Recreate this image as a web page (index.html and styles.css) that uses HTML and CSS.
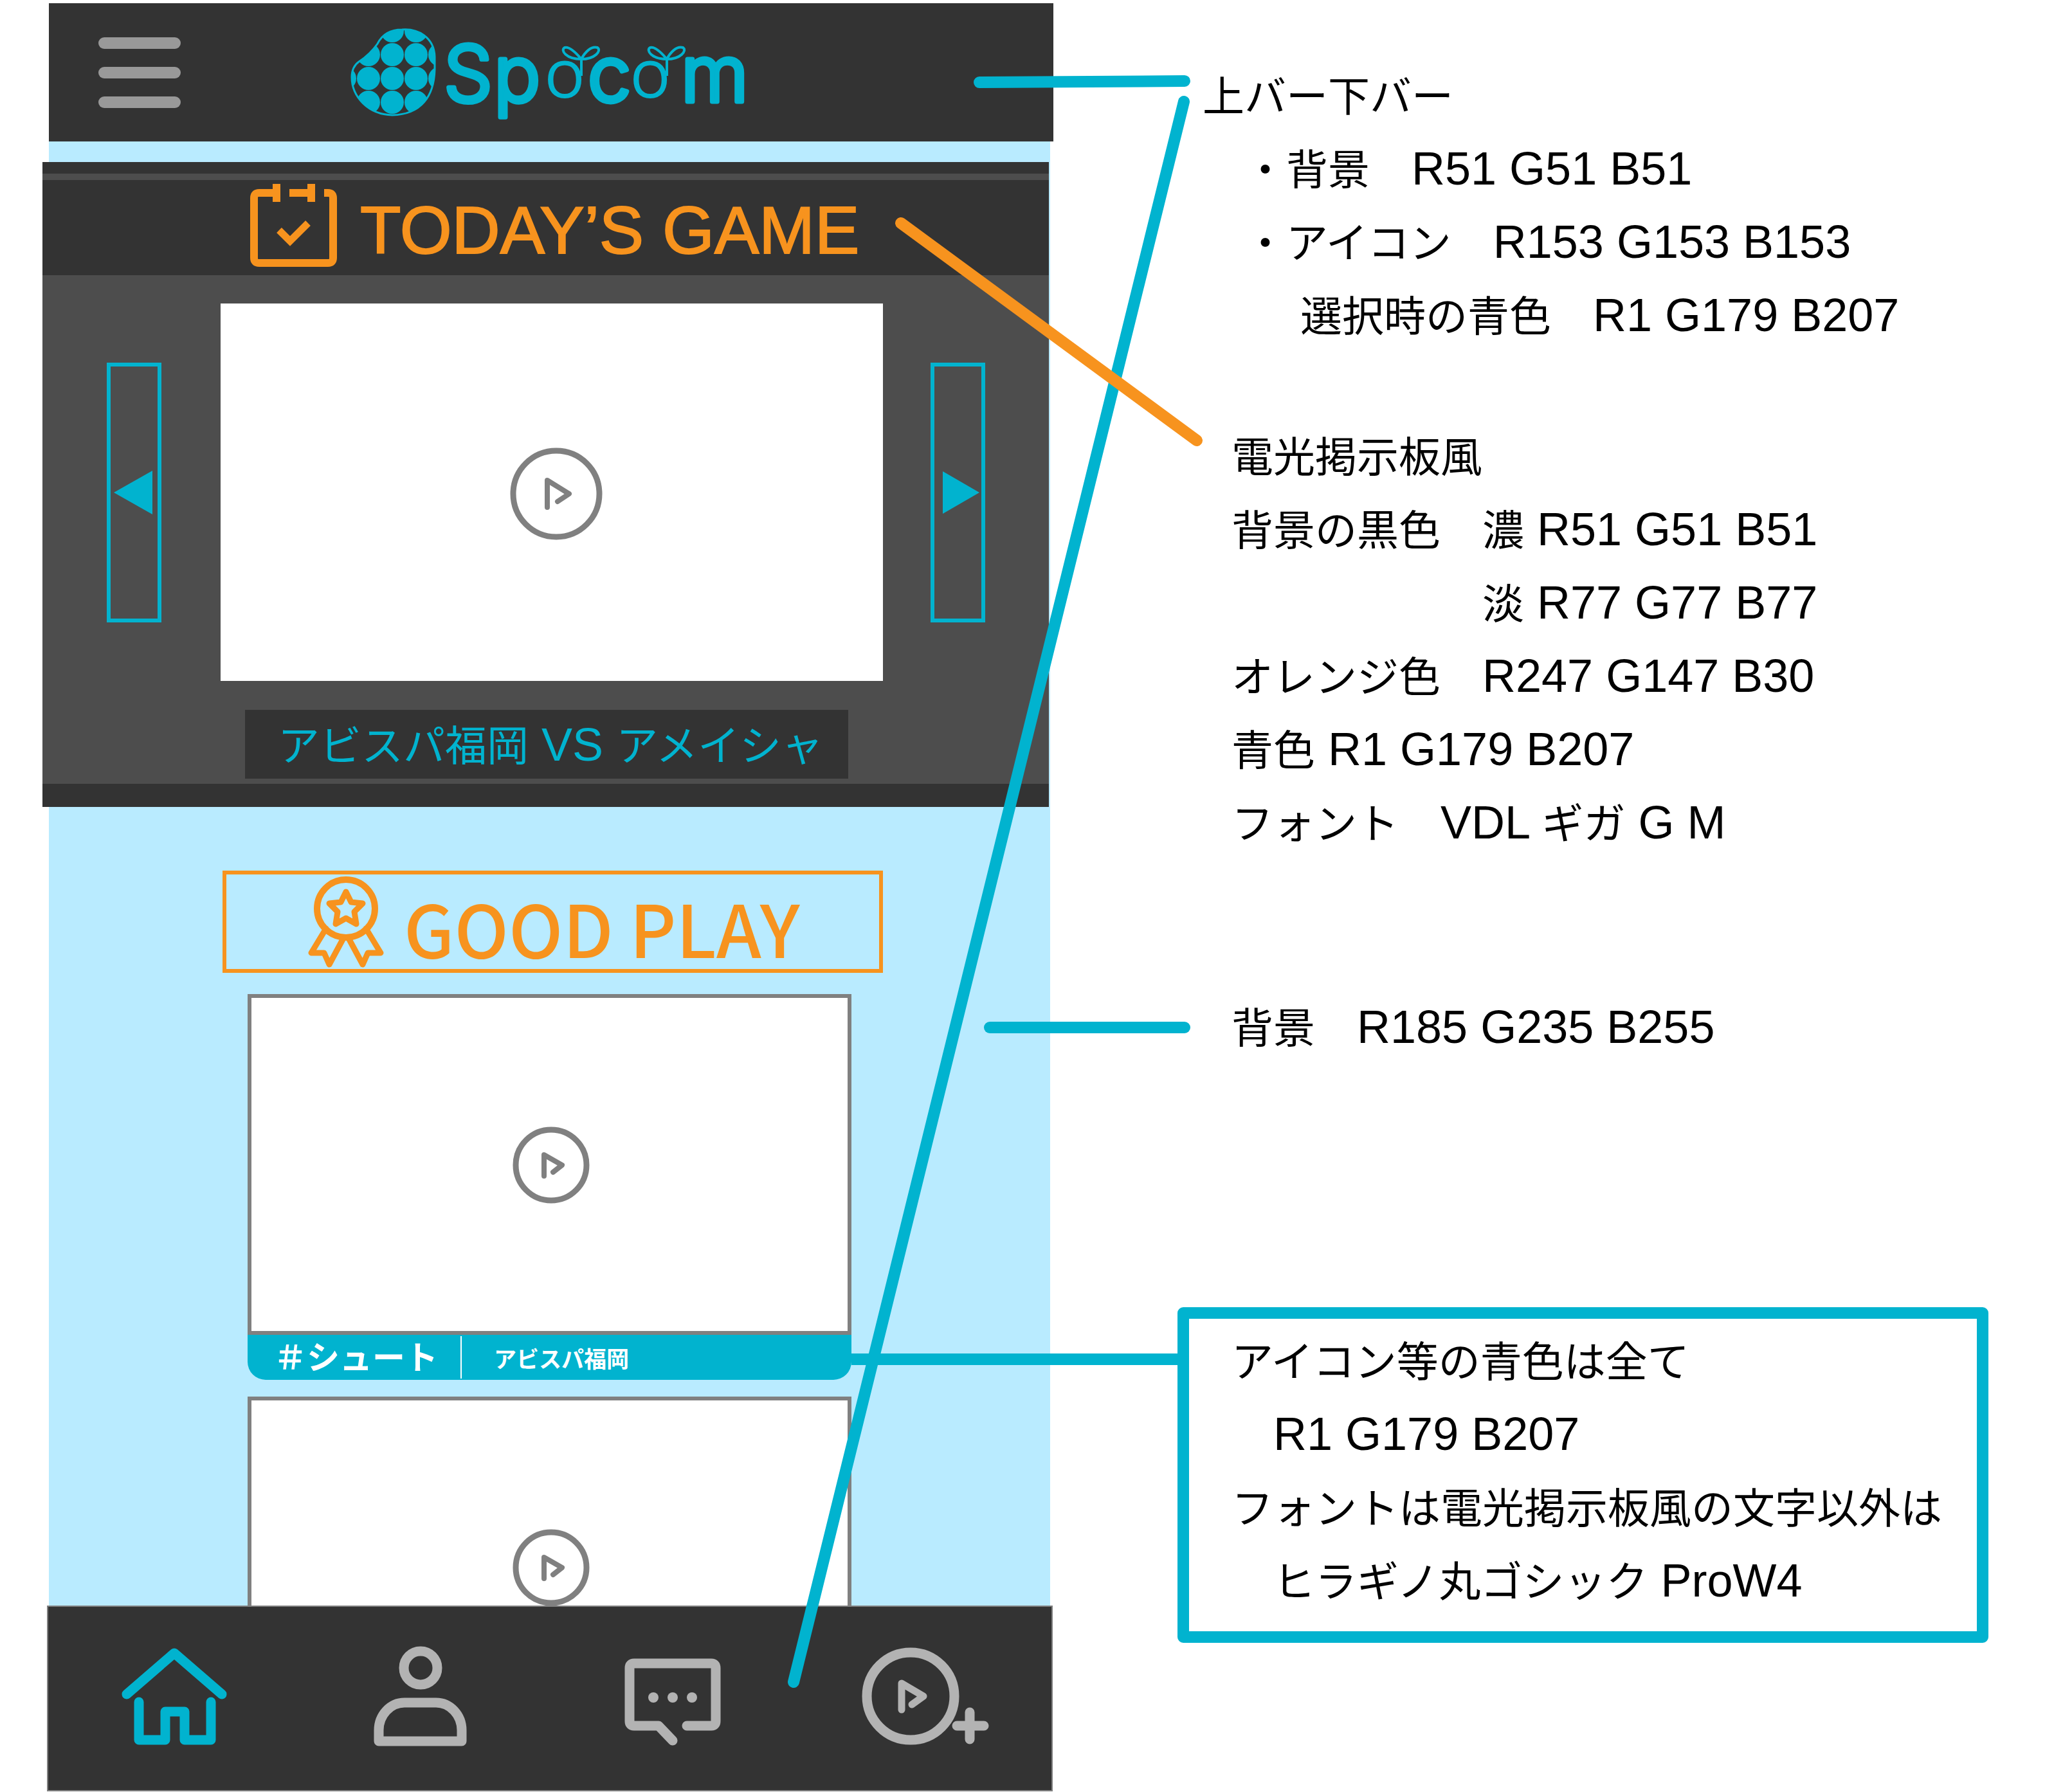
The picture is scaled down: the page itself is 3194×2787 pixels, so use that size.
FILE: index.html
```html
<!DOCTYPE html>
<html lang="ja">
<head>
<meta charset="utf-8">
<meta name="viewport" content="width=device-width, initial-scale=1">
<title>Spocom デザインガイド</title>
<link rel="stylesheet" href="styles.css">
</head>
<body>
<div class="sheet">
  <div class="phone">
    <header class="topbar">
      <button class="menu" type="button" aria-label="メニュー"><span></span><span></span><span></span></button>
      <svg class="logo" viewBox="546 5 612 215" role="img" aria-label="Spocom">
        <defs>
          <clipPath id="potato"><path d="M625 46C650 44 675 58 676 88V108C675 150 655 178 610 179C572 178 547 150 547 120C547 108 551 101 558 96C570 88 580 78 587 68C595 52 608 46 625 46Z"/></clipPath>
          <g id="sprout">
            <path d="M904 118V92M904 92C894 80 885 72 878 74C871 78 880 92 904 92C909 82 919 71 929 74C936 79 925 92 904 92"/>
          </g>
        </defs>
        <g clip-path="url(#potato)" fill="#01b3cf">
          <circle cx="610" cy="48" r="18"/><circle cx="647" cy="48" r="18"/>
          <circle cx="573" cy="85" r="18"/><circle cx="610" cy="85" r="18"/><circle cx="647" cy="85" r="18"/><circle cx="684" cy="85" r="18"/>
          <circle cx="536" cy="122" r="18"/><circle cx="573" cy="122" r="18"/><circle cx="610" cy="122" r="18"/><circle cx="647" cy="122" r="18"/><circle cx="684" cy="122" r="18"/>
          <circle cx="573" cy="159" r="18"/><circle cx="610" cy="159" r="18"/><circle cx="647" cy="159" r="18"/>
        </g>
        <path d="M625 46C650 44 675 58 676 88V108C675 150 655 178 610 179C572 178 547 150 547 120C547 108 551 101 558 96C570 88 580 78 587 68C595 52 608 46 625 46Z" fill="none" stroke="#01b3cf" stroke-width="3"/>
        <text class="wordmark" y="158"><tspan x="690">S</tspan><tspan x="768">p</tspan><tspan class="ring" x="848" y="151">o</tspan><tspan x="914" y="158">c</tspan><tspan class="ring" x="981" y="151">o</tspan><tspan x="1059" y="158">m</tspan></text>
        <g fill="none" stroke="#01b3cf" stroke-width="4" stroke-linejoin="round">
          <use href="#sprout"/><use href="#sprout" x="133"/>
        </g>
      </svg>
    </header>

    <main class="screen">
      <section class="board">
        <div class="board-title">
          <svg class="calendar" viewBox="389 286 135 129" aria-hidden="true">
            <g fill="none" stroke="#f7931e" stroke-width="12">
              <path d="M430 286V314M436 300H403Q395 300 395 308V401Q395 409 403 409H510Q518 409 518 401V308Q518 300 510 300H504"/>
              <path d="M450 300H490M484 286V314"/>
              <path d="M434 358L451 375L479 347" stroke-width="11"/>
            </g>
          </svg>
          <h1>TODAY’S GAME</h1>
        </div>
        <div class="carousel">
          <button class="arrow arrow-prev" type="button" aria-label="前へ"><svg width="60" height="68" viewBox="0 0 60 68"><path d="M0 34L60 0V68Z" fill="#01b3cf"/></svg></button>
          <div class="video">
            <button class="play play-big" type="button" aria-label="再生"><svg viewBox="-72 -72 144 144"><circle r="67" stroke-width="9"/><path d="M-14 21V-21L20 0L2 12" stroke-width="8"/></svg></button>
          </div>
          <button class="arrow arrow-next" type="button" aria-label="次へ"><svg width="57" height="66" viewBox="0 0 57 66"><path d="M57 33L0 0V66Z" fill="#01b3cf"/></svg></button>
        </div>
        <p class="match">アビスパ福岡<span> VS </span>アメイシャ</p>
      </section>

      <section class="feed">
        <div class="feed-title">
          <svg class="medal" viewBox="478 1362 120 147" aria-hidden="true">
            <g fill="none" stroke="#f7931e" stroke-width="9" stroke-linejoin="round" stroke-linecap="round">
              <circle cx="538" cy="1415" r="45" stroke-width="10"/>
              <path d="M538 1389L546 1405L564 1407L551 1420L554 1439L538 1430L522 1439L525 1420L512 1407L530 1405Z"/>
              <path d="M507 1446L484 1484H504L512 1502L533 1463M569 1446L592 1484H572L564 1502L543 1463"/>
            </g>
          </svg>
          <h2>GOOD PLAY</h2>
        </div>
        <article class="card">
          <div class="thumb"><button class="play" type="button" aria-label="再生"><svg viewBox="-60 -60 120 120"><circle r="55" stroke-width="9"/><path d="M-11 17V-16L17 0L3 11" stroke-width="8"/></svg></button></div>
          <div class="label"><a class="tag" href="#shoot">＃シュート</a><span class="team">アビスパ福岡</span></div>
        </article>
        <article class="card card-cut">
          <div class="thumb"><button class="play" type="button" aria-label="再生"><svg viewBox="-60 -60 120 120"><circle r="55" stroke-width="9"/><path d="M-11 17V-16L17 0L3 11" stroke-width="8"/></svg></button></div>
        </article>
      </section>
    </main>

    <nav class="tabs">
      <a class="active" href="#home" aria-label="ホーム"><svg viewBox="170 2555 200 166"><path d="M197 2634L271 2570L345 2634M216 2646V2705H257V2661H287V2705H328V2646"/></svg></a>
      <a href="#profile" aria-label="プロフィール"><svg viewBox="560 2555 200 166"><circle cx="654" cy="2593" r="26"/><path d="M589 2707V2690A40 43 0 0 1 629 2647H678A40 43 0 0 1 718 2690V2707Z"/></svg></a>
      <a href="#chat" aria-label="チャット"><svg viewBox="950 2555 200 166"><path d="M1068 2683H1106Q1113 2683 1113 2676V2593Q1113 2586 1106 2586H986Q979 2586 979 2593V2676Q979 2683 986 2683H1024L1046 2706"/><g class="dots"><circle cx="1016" cy="2639" r="8"/><circle cx="1046" cy="2639" r="8"/><circle cx="1076" cy="2639" r="8"/></g></svg></a>
      <a href="#post" aria-label="動画を追加"><svg viewBox="1340 2555 200 166"><circle cx="1416" cy="2637" r="68"/><path class="thin" d="M1402 2658V2617L1436 2637L1418 2650"/><path d="M1508 2662V2704M1488 2683H1530"/></svg></a>
    </nav>
  </div>

  <aside class="notes">
    <section class="note note-bars">
      <p>上バー下バー</p>
      <p>　・背景　<span>R51 G51 B51</span></p>
      <p>　・アイコン　<span>R153 G153 B153</span></p>
      <p class="sub">選択時の青色　<span>R1 G179 B207</span></p>
    </section>
    <section class="note note-board">
      <p>電光掲示板風</p>
      <p>背景の黒色　濃<span> R51 G51 B51</span></p>
      <p>　　　　　　淡<span> R77 G77 B77</span></p>
      <p>オレンジ色　<span>R247 G147 B30</span></p>
      <p>青色<span> R1 G179 B207</span></p>
      <p>フォント　<span>VDL </span>ギガ<span> G M</span></p>
    </section>
    <section class="note note-back">
      <p>背景　<span>R185 G235 B255</span></p>
    </section>
    <section class="note note-box">
      <p>アイコン等の青色は全て</p>
      <p>　<span>R1 G179 B207</span></p>
      <p>フォントは電光掲示板風の文字以外は</p>
      <p>　ヒラギノ丸ゴシック<span> ProW4</span></p>
    </section>
  </aside>

  <svg class="leaders" viewBox="0 0 3194 2786" preserveAspectRatio="none" aria-hidden="true">
    <g stroke="#01b3cf" stroke-width="18" stroke-linecap="round">
      <path d="M1523 128L1842 126"/>
      <path d="M1841 158L1234 2616"/>
      <path d="M1539 1598H1842"/>
      <path d="M1324 2114H1840" stroke-linecap="butt"/>
    </g>
    <path d="M1401 347L1861 685" stroke="#f7931e" stroke-width="18" stroke-linecap="round"/>
  </svg>
</div>
</body>
</html>
```
FILE: styles.css
```css
:root {
  --dark: #333333;
  --mid: #4d4d4d;
  --blue: #01b3cf;
  --orange: #f7931e;
  --sky: #b9ebff;
  --gray: #808080;
}

* {
  box-sizing: border-box;
  margin: 0;
  padding: 0;
}

body {
  background: #ffffff;
  color: #000000;
  font-family: "Noto Sans CJK JP", sans-serif;
}

button {
  border: 0;
  background: none;
  cursor: pointer;
}

svg {
  display: block;
}

.sheet {
  position: relative;
  display: grid;
  grid-template-columns: 1572fr 1261fr;
  column-gap: 193px;
  padding: 5px 102px 0 66px;
}

/* top bar */
.topbar {
  display: flex;
  align-items: center;
  gap: 265px;
  margin-left: 10px;
  padding-left: 77px;
  background: var(--dark);
}

.menu {
  display: flex;
  flex-direction: column;
  gap: 28px;
  width: 128px;
}

.menu span {
  height: 18px;
  border-radius: 9px;
  background: #999999;
}

.logo {
  width: 612px;
  height: 215px;
  overflow: visible;
}

.wordmark {
  font: 300 120px Inter, sans-serif;
  fill: var(--blue);
  stroke: var(--blue);
  stroke-width: 7px;
  stroke-linejoin: round;
}

.ring {
  font: 300 108px Lato, sans-serif;
  stroke-width: 3px;
}

/* screen */
.screen {
  margin: 0 5px 0 10px;
  padding-top: 32px;
  background: var(--sky);
}

.board {
  margin: 0 2px 0 -10px;
  padding: 10px 0 8px;
  border-top: 18px solid var(--dark);
  border-bottom: 36px solid var(--dark);
  background: var(--mid);
}

.board-title {
  display: flex;
  gap: 36px;
  height: 148px;
  padding: 6px 0 0 323px;
  background: var(--dark);
}

.calendar {
  width: 135px;
  height: 129px;
}

.board-title h1 {
  padding-top: 4px;
  color: var(--orange);
  font: 400 104px/136px "Liberation Sans", sans-serif;
  -webkit-text-stroke: 2px var(--orange);
  white-space: nowrap;
}

.carousel {
  display: grid;
  grid-template-columns: 85px 1fr 85px;
  align-items: center;
  padding: 44px 99px 0 100px;
}

.arrow {
  display: flex;
  align-items: center;
  justify-content: center;
  height: 404px;
  border: 6px solid var(--blue);
}

.arrow-prev {
  padding-right: 3px;
}

.arrow-next {
  padding-left: 10px;
}

.video {
  display: flex;
  align-items: center;
  justify-content: center;
  height: 587px;
  margin: 0 74px 0 92px;
  padding: 4px 0 0 14px;
  background: #ffffff;
}

.play {
  width: 120px;
  height: 120px;
}

.play-big {
  width: 144px;
  height: 144px;
}

.play svg {
  fill: none;
  stroke: var(--gray);
  stroke-linecap: round;
  stroke-linejoin: round;
}

.match {
  margin: 45px 312px 0 315px;
  padding: 0 0 5px 12px;
  background: var(--dark);
  color: var(--blue);
  font-size: 65px;
  line-height: 102px;
  text-align: center;
  white-space: nowrap;
}

.match span {
  font-family: "Liberation Sans", sans-serif;
  font-size: 72px;
  line-height: 1;
}

/* feed */
.feed {
  padding: 99px 0 0;
}

.feed-title {
  display: flex;
  align-items: center;
  gap: 30px;
  margin: 0 260px 33px 270px;
  height: 159px;
  padding-left: 126px;
  border: 6px solid var(--orange);
}

.medal {
  width: 120px;
  height: 147px;
}

.feed-title h2 {
  padding-top: 14px;
  color: var(--orange);
  font-size: 112px;
  font-weight: 500;
  line-height: 120px;
  white-space: nowrap;
}

.card {
  margin: 0 309px 26px;
}

.thumb {
  display: flex;
  align-items: center;
  justify-content: center;
  height: 530px;
  padding: 2px 0 0 4px;
  border: 6px solid var(--gray);
  background: #ffffff;
}

.card-cut {
  height: 325px;
  margin-bottom: 0;
  overflow: hidden;
}

.label {
  display: flex;
  align-items: center;
  height: 70px;
  padding-left: 41px;
  border-radius: 0 0 28px 28px;
  background: var(--blue);
  color: #ffffff;
  font-weight: 700;
  white-space: nowrap;
}

.tag {
  width: 292px;
  padding-bottom: 6px;
  border-right: 2px solid #ffffff;
  color: inherit;
  font-size: 51px;
  line-height: 60px;
  text-decoration: none;
}

.team {
  padding-left: 50px;
  font-size: 35px;
}

/* bottom tabs */
.tabs {
  display: grid;
  grid-template-columns: repeat(4, 1fr);
  height: 289px;
  margin: 0 1px 0 7px;
  padding-bottom: 6px;
  border: 2px solid var(--gray);
  background: var(--dark);
}

.tabs a {
  display: flex;
  align-items: center;
  justify-content: center;
  color: #b3b3b3;
}

.tabs .active {
  color: var(--blue);
}

.tabs svg {
  width: 200px;
  height: 166px;
  fill: none;
  stroke: currentColor;
  stroke-width: 15px;
  stroke-linecap: round;
  stroke-linejoin: round;
}

.tabs .thin {
  stroke-width: 11px;
}

.tabs .dots {
  fill: currentColor;
  stroke: none;
}

/* notes */
.notes {
  padding-top: 83px;
  font-size: 65px;
  line-height: 114px;
}

.note p {
  white-space: pre;
}

.note span {
  font-family: "Liberation Sans", sans-serif;
  font-size: 72px;
  line-height: 1;
}

.note-bars {
  padding-left: 39px;
}

.note-bars .sub {
  padding-left: 152px;
}

.note-board {
  margin-top: 105px;
  padding-left: 84px;
}

.note-back {
  margin-top: 204px;
  padding-left: 84px;
}

.note-box {
  margin-top: 382px;
  padding: 5px 0 25px 66px;
  border: 18px solid var(--blue);
  border-radius: 9px;
}

.leaders {
  position: absolute;
  inset: 0;
  width: 100%;
  height: 100%;
  fill: none;
  pointer-events: none;
}
```
